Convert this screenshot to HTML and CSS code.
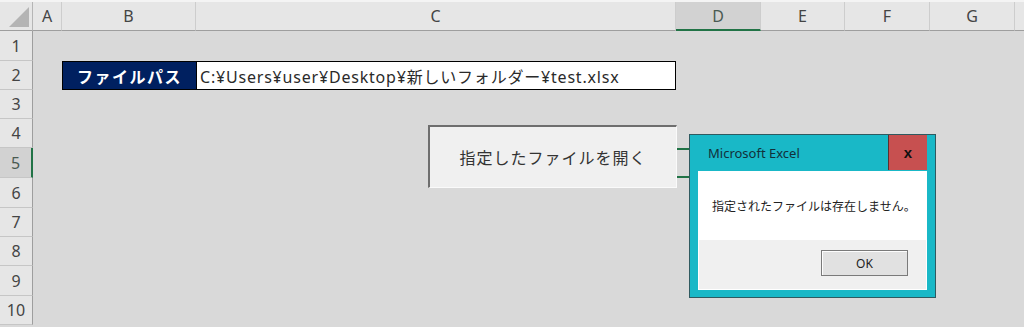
FILE: index.html
```html
<!DOCTYPE html>
<html lang="ja">
<head>
<meta charset="utf-8">
<link rel="stylesheet" href="styles.css">
</head>
<body>
<div class="topstrip"></div>
<div class="sheet">
  <div class="corner"><span class="tri"></span></div>
  <div class="colh">A</div>
  <div class="colh">B</div>
  <div class="colh">C</div>
  <div class="colh sel">D</div>
  <div class="colh">E</div>
  <div class="colh">F</div>
  <div class="colh">G</div>
  <div class="colh last"></div>

  <div class="rowh r1">1</div>
  <div class="rowh r2">2</div>
  <div class="rowh r3">3</div>
  <div class="rowh r4">4</div>
  <div class="rowh r5 sel">5</div>
  <div class="rowh r6">6</div>
  <div class="rowh r7">7</div>
  <div class="rowh r8">8</div>
  <div class="rowh r9">9</div>
  <div class="rowh r10">10</div>

  <div class="label">ファイルパス</div>
  <div class="path">C:¥Users¥user¥Desktop¥新しいフォルダー¥test.xlsx</div>
  <div class="selcell"></div>
</div>

<div class="macro-btn">指定したファイルを開く</div>

<div class="dialog">
  <div class="titlebar">
    <span class="title">Microsoft Excel</span>
    <span class="close">x</span>
  </div>
  <div class="dbody">
    <div class="msg">指定されたファイルは存在しません。</div>
    <div class="footer"><span class="ok">OK</span></div>
  </div>
</div>
</body>
</html>
```

FILE: styles.css
```css
html, body {
  margin: 0;
  padding: 0;
}
body {
  width: 1024px;
  height: 327px;
  overflow: hidden;
  background: #d9d9d9;
  font-family: "Noto Sans CJK JP", "Liberation Sans", sans-serif;
  position: relative;
}
.topstrip {
  height: 2px;
  background: #f4f4f4;
}
.sheet {
  display: grid;
  grid-template-columns: 33px 29px 134px 480px 85px 84px 85px 85px 1fr;
  grid-template-rows: 29px 30px 29px 29px 29px 30px 30px 29px 29px 30px 29px 10px;
  background: #d9d9d9;
}
.corner {
  background: #e6e6e6;
  border-right: 1px solid #b5b5b5;
  border-bottom: 1px solid #9e9e9e;
  position: relative;
}
.tri {
  position: absolute;
  right: 3px;
  bottom: 3px;
  width: 0;
  height: 0;
  border-left: 20px solid transparent;
  border-bottom: 20px solid #b4b4b4;
}
.colh {
  background: #e6e6e6;
  border-right: 1px solid #cdcdcd;
  border-bottom: 1px solid #9e9e9e;
  display: flex;
  align-items: center;
  justify-content: center;
  font-size: 16px;
  color: #444;
  font-family: "Noto Sans", "Noto Sans CJK JP", sans-serif;
}
.colh.sel {
  background: #d2d2d2;
  border-bottom: 2px solid #217346;
  color: #4a5a52;
}
.colh.last {
  border-right: none;
}
.rowh {
  grid-column: 1;
  background: #e6e6e6;
  border-right: 1px solid #9e9e9e;
  border-bottom: 1px solid #c6c6c6;
  display: flex;
  align-items: center;
  justify-content: center;
  font-size: 16px;
  color: #444;
  font-family: "Noto Sans", "Noto Sans CJK JP", sans-serif;
}
.rowh.sel {
  background: #d2d2d2;
  border-right: 2px solid #217346;
  color: #4a5a52;
}
.r1 { grid-row: 2; }
.r2 { grid-row: 3; }
.r3 { grid-row: 4; }
.r4 { grid-row: 5; }
.r5 { grid-row: 6; }
.r6 { grid-row: 7; }
.r7 { grid-row: 8; }
.r8 { grid-row: 9; }
.r9 { grid-row: 10; }
.r10 { grid-row: 11; }

.label {
  grid-row: 3;
  grid-column: 3;
  background: #002060;
  color: #fff;
  font-weight: bold;
  font-size: 16px;
  letter-spacing: 1.5px;
  display: flex;
  align-items: center;
  justify-content: center;
  border: 1px solid #000;
  border-right: none;
}
.path {
  grid-row: 3;
  grid-column: 4;
  background: #fff;
  border: 1px solid #000;
  font-family: "Noto Sans", "Noto Sans CJK JP", sans-serif;
  font-size: 16px;
  letter-spacing: 0.8px;
  color: #2a2a2a;
  display: flex;
  align-items: center;
  padding-left: 3px;
}
.selcell {
  grid-row: 6;
  grid-column: 5;
  border: 2px solid #217346;
  border-left: none;
}

.macro-btn {
  position: absolute;
  left: 428px;
  top: 125px;
  width: 246px;
  height: 60px;
  background: #f0f0f0;
  border-top: 2px solid #6e6e6e;
  border-left: 2px solid #6e6e6e;
  border-right: 1px solid #fafafa;
  border-bottom: 1px solid #fafafa;
  display: flex;
  align-items: center;
  justify-content: center;
  font-size: 16px;
  letter-spacing: 1px;
  color: #333;
}

.dialog {
  position: absolute;
  left: 689px;
  top: 134px;
  width: 245px;
  height: 162px;
  border: 1px solid #2f5a60;
  background: #19b8c7;
  display: flex;
  flex-direction: column;
}
.titlebar {
  height: 36px;
  display: flex;
  align-items: stretch;
}
.title {
  flex: 1;
  padding-left: 18px;
  display: flex;
  align-items: center;
  font-size: 13px;
  color: #12303a;
  font-family: "Noto Sans", "Liberation Sans", sans-serif;
}
.close {
  width: 38px;
  height: 35px;
  background: #c75050;
  border-left: 1px solid #5a3030;
  margin-right: 8px;
  display: flex;
  align-items: center;
  justify-content: center;
  font-weight: bold;
  font-size: 15px;
  color: #111;
  font-family: "Liberation Sans", sans-serif;
}
.dbody {
  margin: 0 8px 7px 8px;
  flex: 1;
  display: flex;
  flex-direction: column;
  background: #f0f0f0;
  border: 1px solid #ffffff;
  border-top: none;
}
.msg {
  height: 69px;
  background: #fff;
  display: flex;
  align-items: center;
  padding-left: 13px;
  font-size: 12px;
  color: #222;
}
.footer {
  flex: 1;
  display: flex;
  justify-content: flex-end;
  align-items: flex-start;
  padding: 10px 18px 0 0;
}
.ok {
  width: 85px;
  height: 24px;
  background: #e1e1e1;
  border: 1px solid #7a7a7a;
  box-shadow: inset 1px 1px 0 #fdfdfd;
  display: flex;
  align-items: center;
  justify-content: center;
  font-size: 12px;
  color: #222;
  font-family: "Noto Sans", "Liberation Sans", sans-serif;
}
```
